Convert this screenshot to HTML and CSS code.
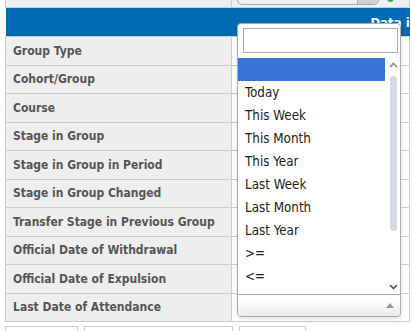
FILE: index.html
```html
<!DOCTYPE html>
<html lang="en">
<head>
    <meta charset="UTF-8">
    <title>Student Filters</title>
    <link rel="stylesheet" href="styles.css">
</head>
<body>
<div class="page">
    <table class="grid">
        <tr class="filter-row">
            <td class="label"></td>
            <td class="field">
                <div class="top-select">
                    <span class="top-select-value"></span>
                    <span class="top-select-arrow"></span>
                </div>
                <span class="ok-icon"></span>
            </td>
        </tr>
        <tr class="head">
            <th colspan="2"><span class="head-title">Data in</span></th>
        </tr>
        <tr><td class="label">Group Type</td><td class="field"></td></tr>
        <tr><td class="label">Cohort/Group</td><td class="field"></td></tr>
        <tr><td class="label">Course</td><td class="field"></td></tr>
        <tr><td class="label">Stage in Group</td><td class="field"></td></tr>
        <tr><td class="label">Stage in Group in Period</td><td class="field"></td></tr>
        <tr><td class="label">Stage in Group Changed</td><td class="field"></td></tr>
        <tr><td class="label">Transfer Stage in Previous Group</td><td class="field"></td></tr>
        <tr><td class="label">Official Date of Withdrawal</td><td class="field"></td></tr>
        <tr><td class="label">Official Date of Expulsion</td><td class="field"></td></tr>
        <tr><td class="label">Last Date of Attendance</td><td class="field"></td></tr>
    </table>

    <!-- Form buttons, only their top edge is on screen -->
    <div class="actions">
        <button class="btn btn-small" aria-label="Search"></button>
        <button class="btn btn-wide" aria-label="Save search criteria"></button>
        <button class="btn btn-mid" aria-label="Clear"></button>
    </div>
</div>

<!-- Open date picker list for "Last Date of Attendance" -->
<div class="dropdown">
    <div class="dd-search"><input type="text"></div>
    <div class="dd-body">
        <ul class="dd-list">
            <li class="active">&nbsp;</li>
            <li>Today</li>
            <li>This Week</li>
            <li>This Month</li>
            <li>This Year</li>
            <li>Last Week</li>
            <li>Last Month</li>
            <li>Last Year</li>
            <li>&gt;=</li>
            <li>&lt;=</li>
        </ul>
        <div class="dd-scroll">
            <svg class="dd-arrow" width="9" height="6" viewBox="0 0 9 6"><path d="M1 5 L4.5 1.5 L8 5" fill="none" stroke="#8a8a8a" stroke-width="1.6"/></svg>
            <div class="dd-track"><div class="dd-thumb"></div></div>
            <svg class="dd-arrow" width="9" height="6" viewBox="0 0 9 6"><path d="M1 1 L4.5 4.5 L8 1" fill="none" stroke="#555" stroke-width="1.6"/></svg>
        </div>
    </div>
    <div class="dd-current">
        <span class="dd-caret"></span>
    </div>
</div>
</body>
</html>
```

FILE: styles.css
```css
/* Filter form with an open dropdown */
body {
  margin: 0;
  background-color: #fff;
  font-family: "DejaVu Sans Condensed", "DejaVu Sans", sans-serif;
  overflow: hidden;
  position: relative;
  height: 331px;
}
.page {
  margin-top: -22px;
  padding-left: 5px;
}
.grid {
  border-collapse: collapse;
  width: 405px;
  table-layout: fixed;
}
.grid td {
  border: 1px solid #ccc;
  height: 27.5px;
  padding: 0 7px;
  vertical-align: middle;
}
.grid td.label {
  width: 211px;
  background-color: #eee;
  color: #555;
  font-weight: bold;
  font-size: 12px;
  white-space: nowrap;
}
.grid td.field {
  background-color: #fff;
  padding: 0 5px;
}
.filter-row td {
  height: 28px;
}
.filter-row td.field {
  background-color: #f0f0f0;
  position: relative;
}
.top-select {
  display: flex;
  width: 140px;
  height: 22px;
  border: 1px solid #aaa;
  border-radius: 5px;
  overflow: hidden;
  background: linear-gradient(#fff, #eee);
}
.top-select-value {
  flex: 1;
}
.top-select-arrow {
  width: 20px;
  border-left: 1px solid #aaa;
  background: linear-gradient(#eee, #ccc);
}
.ok-icon {
  position: absolute;
  left: 155px;
  top: 14px;
  width: 7px;
  height: 9px;
  border-radius: 50%;
  background-color: #3aa83a;
}
.head th {
  background-color: #006ab3;
  height: 28px;
  padding: 0;
  text-align: left;
  border: none;
  color: #fff;
  font-size: 13px;
  font-weight: bold;
  overflow: hidden;
}
.head-title {
  display: inline-block;
  padding-left: 365px;
  white-space: nowrap;
}
.actions {
  display: flex;
  gap: 6px;
  margin-top: 4px;
}
.btn {
  height: 24px;
  border: 1px solid #ccc;
  background: #fff;
  border-radius: 0;
  padding: 0;
}
.btn-small { width: 73px; }
.btn-wide { width: 149px; }
.btn-mid { width: 67px; }

/* Dropdown panel */
.dropdown {
  position: absolute;
  left: 237px;
  top: 23px;
  width: 162px;
  height: 292px;
  border: 1px solid #aaa;
  border-radius: 4px;
  background: #fff;
  box-shadow: 0 2px 4px rgba(0,0,0,0.12);
  display: flex;
  flex-direction: column;
  overflow: hidden;
}
.dd-search {
  padding: 4px 3px 5px 5px;
}
.dd-search input {
  display: block;
  width: 155px;
  height: 25px;
  box-sizing: border-box;
  border: 1px solid #aaa;
  margin: 0;
  padding: 0 4px;
}
.dd-body {
  display: flex;
  height: 236px;
  border-bottom: 1px solid #aaa;
}
.dd-list {
  list-style: none;
  margin: 0;
  padding: 0;
  flex: 1;
  overflow: hidden;
}
.dd-list li {
  box-sizing: border-box;
  height: 23px;
  line-height: 22px;
  padding: 1px 0 0 7px;
  font-size: 13.3px;
  color: #222;
  white-space: nowrap;
}
.dd-list li.active {
  background-color: #3875d7;
}
.dd-scroll {
  width: 15px;
  display: flex;
  flex-direction: column;
  align-items: center;
  padding: 4px 0 4px;
}
.dd-arrow {
  flex: none;
  margin-left: 1px;
}
.dd-track {
  flex: 1;
  width: 7px;
  padding: 8px 0 53px;
  margin-left: 2px;
}
.dd-thumb {
  height: 100%;
  border-radius: 3px;
  background-color: #d3dce4;
}
.dd-current {
  flex: 1;
  display: flex;
  align-items: center;
  justify-content: flex-end;
  padding-right: 6px;
  background: linear-gradient(#fff 20%, #eaeaea);
}
.dd-caret {
  width: 0;
  height: 0;
  border-left: 4px solid transparent;
  border-right: 4px solid transparent;
  border-bottom: 5px solid #999;
}
```
